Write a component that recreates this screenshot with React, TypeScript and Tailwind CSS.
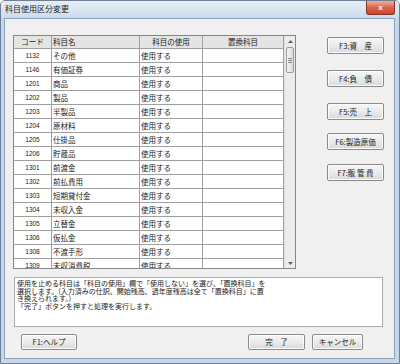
import React from 'react';

const rows: [string, string][] = [
  ['1132', 'その他'],
  ['1146', '有価証券'],
  ['1201', '商品'],
  ['1202', '製品'],
  ['1203', '半製品'],
  ['1204', '原材料'],
  ['1205', '仕掛品'],
  ['1206', '貯蔵品'],
  ['1301', '前渡金'],
  ['1302', '前払費用'],
  ['1303', '短期貸付金'],
  ['1304', '未収入金'],
  ['1305', '立替金'],
  ['1306', '仮払金'],
  ['1308', '不渡手形'],
  ['1309', '未収消費税'],
];

const jp = { fontFamily: '"Noto Sans CJK JP", "Liberation Sans", sans-serif' };

const WinButton: React.FC<{ label: string; className?: string }> = ({ label, className = '' }) => (
  <div
    className={`flex items-center justify-center rounded-[2px] border border-[#8a8a8a] bg-gradient-to-b from-[#f6f6f6] via-[#ebebeb] to-[#d9d9d9] text-[7.5px] text-[#222] shadow-[inset_0_0_0_1px_#fcfcfc] whitespace-pre ${className}`}
  >
    {label}
  </div>
);

export default function App() {
  return (
    <div className="w-[400px] h-[364px] bg-[#c6d7ea] border border-[#6e8096] rounded-t-[5px] overflow-hidden flex flex-col" style={jp}>
      {/* title bar */}
      <div className="h-[17px] shrink-0 flex items-start justify-between bg-gradient-to-b from-[#e6eef7] to-[#cddcec]">
        <span className="pl-[4px] pt-[3px] text-[8px] leading-[10px] text-[#1e1e1e]">科目使用区分変更</span>
        <div className="mr-[4px] w-[29px] h-[14px] rounded-b-[3px] border border-t-0 border-[#8a3428] bg-gradient-to-b from-[#eeb1a1] via-[#d9644d] to-[#c8452f] flex items-center justify-center">
          <span className="text-white text-[8px] font-bold leading-none" style={{ fontFamily: '"Liberation Sans", sans-serif' }}>x</span>
        </div>
      </div>

      {/* client area */}
      <div className="ml-[3px] mr-[4px] h-[341px] bg-[#f0f0f0] border border-[#8da2bd] flex flex-col pl-[8px] pt-[16px]">
        <div className="flex items-start">
          {/* grid */}
          <div className="w-[283px] h-[234px] border border-[#828790] bg-white flex overflow-hidden">
            <div className="w-[270px] flex flex-col">
              <div className="h-[13px] shrink-0 flex bg-[#e4e4e4] border-b border-[#a0a0a0] text-[7.5px] leading-[12px] text-[#222]">
                <div className="w-[38px] border-r border-[#a0a0a0] text-center">コード</div>
                <div className="w-[88px] border-r border-[#a0a0a0] pl-[1px]">科目名</div>
                <div className="w-[63px] border-r border-[#a0a0a0] text-center">科目の使用</div>
                <div className="w-[81px] border-r border-[#a0a0a0] text-center">置換科目</div>
              </div>
              {rows.map(([code, name]) => (
                <div key={code} className="h-[14px] shrink-0 flex border-b border-[#a0a0a0] text-[7.5px] leading-[13px] text-[#222]">
                  <div className="w-[38px] border-r border-[#a0a0a0] text-center text-[6.5px]" style={{ fontFamily: '"Liberation Sans", sans-serif' }}>{code}</div>
                  <div className="w-[88px] border-r border-[#a0a0a0] pl-[1px]">{name}</div>
                  <div className="w-[63px] border-r border-[#a0a0a0] pl-[1px]">使用する</div>
                  <div className="w-[81px] border-r border-[#a0a0a0]"></div>
                </div>
              ))}
            </div>
            {/* scrollbar */}
            <div className="w-[11px] flex flex-col bg-[#ececec] border-l border-[#e0e0e0]">
              <div className="h-[10px] flex items-center justify-center">
                <svg width="5" height="3" viewBox="0 0 5 3"><path d="M2.5 0 L5 3 L0 3 Z" fill="#606060" /></svg>
              </div>
              <div className="mx-[1px] mt-[1px] h-[26px] rounded-[2px] border border-[#9a9a9a] bg-gradient-to-r from-[#f4f4f4] to-[#dcdcdc] flex flex-col items-center justify-center gap-[1px]">
                <div className="w-[4px] h-px bg-[#8a8a8a]" />
                <div className="w-[4px] h-px bg-[#8a8a8a]" />
                <div className="w-[4px] h-px bg-[#8a8a8a]" />
              </div>
              <div className="flex-1" />
              <div className="h-[10px] flex items-center justify-center">
                <svg width="5" height="3" viewBox="0 0 5 3"><path d="M0 0 L5 0 L2.5 3 Z" fill="#606060" /></svg>
              </div>
            </div>
          </div>

          {/* right buttons */}
          <div className="ml-[31px] flex flex-col">
            <WinButton label={'F3:資　産'} className="mt-[2px] w-[57px] h-[17px]" />
            <WinButton label={'F4:負　債'} className="mt-[16px] w-[57px] h-[17px]" />
            <WinButton label={'F5:売　上'} className="mt-[16px] w-[57px] h-[17px]" />
            <WinButton label={'F6:製造原価'} className="mt-[13px] w-[57px] h-[17px]" />
            <WinButton label={'F7:販 管 費'} className="mt-[14px] w-[57px] h-[17px]" />
          </div>
        </div>

        {/* message */}
        <div className="mt-[8px] ml-[1px] w-[369px] h-[50px] bg-white border border-[#abadb3] px-[2px] pt-[2px] text-[7px] leading-[7.5px] text-[#222]">
          <div>使用を止める科目は「科目の使用」欄で「使用しない」を選び、「置換科目」を</div>
          <div>選択します。(入力済みの仕訳、開始残高、過年度残高は全て「置換科目」に置</div>
          <div>き換えられます。)</div>
          <div>「完了」ボタンを押すと処理を実行します。</div>
        </div>

        {/* bottom buttons */}
        <div className="mt-[7px] flex">
          <WinButton label={'F1:ヘルプ'} className="ml-[8px] w-[56px] h-[16px]" />
          <WinButton label={'完　了'} className="ml-[171px] w-[57px] h-[16px]" />
          <WinButton label={'キャンセル'} className="ml-[7px] w-[51px] h-[16px]" />
        </div>
      </div>
    </div>
  );
}
